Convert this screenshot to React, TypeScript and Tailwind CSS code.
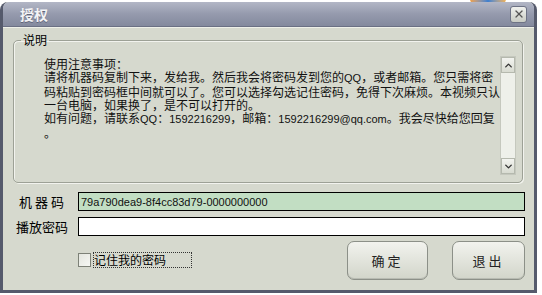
import { ChevronDown, ChevronUp, X } from 'lucide-react'

function Latin({ children }: { children: string }) {
  return <span className="font-['Liberation_Sans',sans-serif] text-[11px]">{children}</span>
}

function Button({ label }: { label: string }) {
  return (
    <button className="flex h-[39px] items-center justify-center rounded-[7px] border border-[#8c9088] bg-gradient-to-b from-[#f2f3ee] to-[#d2d5ca] text-[13px] tracking-[3px] text-[#222] shadow-[inset_0_-1px_0_#b8bbb2]">
      {label}
    </button>
  )
}

export default function App() {
  return (
    <div className="relative h-[295px] w-[542px] overflow-hidden bg-white font-['Noto_Sans_CJK_SC',sans-serif] text-black">
      {/* desktop icon peeking behind the window */}
      <div className="absolute left-[470px] top-[-6px] h-[10px] w-[36px] rounded-full bg-gradient-to-r from-[#f0a040] via-[#3b7fd0] to-[#f0b050]" />

      <div className="relative mt-[2px] flex h-[291px] w-[537px] flex-col rounded-t-[8px] border-x-[3px] border-b-[3px] border-[#555a6c] bg-[#d6d9ce]">
        {/* title bar */}
        <div className="flex h-[25px] items-center justify-between rounded-t-[6px] border-b border-[#6b7084] bg-gradient-to-b from-[#b3b7c6] via-[#959aad] to-[#848a9e] pl-[17px] pr-[7px]">
          <span className="text-[14px] font-bold text-[#f4f4f6] [text-shadow:0_1px_0_#60657a]">授权</span>
          <div className="flex h-[17px] w-[17px] items-center justify-center rounded-[3px] border border-[#6e7385] bg-gradient-to-b from-[#f0f1ee] to-[#c9ccc4]">
            <X size={12} strokeWidth={2.5} className="text-[#555]" />
          </div>
        </div>
        <div className="h-[1px] bg-[#eef0e8]" />

        <div className="flex flex-1 flex-col pl-[10px] pr-[9px] pt-[5px]">
          {/* 说明 group */}
          <fieldset className="mr-[2px] h-[150px] min-w-0 rounded-[5px] border border-[#9da196] shadow-[inset_1px_1px_0_#f2f3ee,1px_1px_0_#f2f3ee]">
            <legend className="ml-[7px] px-[2px] text-[12px] leading-[14px]">说明</legend>
            <div className="mt-[9px] flex h-[119px] gap-[7px] pl-[30px] pr-[6px]">
              <div className="min-w-0 flex-1 pt-[1px] text-[12px] leading-[13px] text-[#111]">
                <div className="whitespace-nowrap">使用注意事项：</div>
                <div className="whitespace-nowrap">
                  请将机器码复制下来，发给我。然后我会将密码发到您的<Latin>QQ</Latin>，或者邮箱。您只需将密
                </div>
                <div className="whitespace-nowrap">
                  码粘贴到密码框中间就可以了。您可以选择勾选记住密码，免得下次麻烦。本视频只认
                </div>
                <div className="whitespace-nowrap">一台电脑，如果换了，是不可以打开的。</div>
                <div className="whitespace-nowrap">
                  如有问题，请联系<Latin>QQ</Latin>：<Latin>1592216299</Latin>，邮箱：
                  <Latin>1592216299@qq.com</Latin>。我会尽快给您回复
                </div>
                <div className="whitespace-nowrap">。</div>
              </div>
              <div className="flex w-[16px] shrink-0 flex-col border border-[#c5c8be] bg-[#eef0ea]">
                <div className="flex h-[16px] items-center justify-center border border-[#b5b9ae] bg-gradient-to-b from-[#f3f4f0] to-[#d8dbd1]">
                  <ChevronUp size={11} strokeWidth={3} className="text-[#333]" />
                </div>
                <div className="flex-1" />
                <div className="flex h-[16px] items-center justify-center border border-[#b5b9ae] bg-gradient-to-b from-[#f3f4f0] to-[#d8dbd1]">
                  <ChevronDown size={11} strokeWidth={3} className="text-[#333]" />
                </div>
              </div>
            </div>
          </fieldset>

          {/* inputs */}
          <div className="mt-[9px] grid grid-cols-[55px_1fr] items-center gap-x-[10px] gap-y-[5px] text-[13px]">
            <span className="pr-[1px] text-right tracking-[3px]">机器码</span>
            <div className="flex h-[19px] items-center border border-black bg-[#c2dec3] pl-[2px] font-['Liberation_Sans',sans-serif] text-[11px] text-[#111]">
              79a790dea9-8f4cc83d79-0000000000
            </div>
            <span className="text-right">播放密码</span>
            <div className="h-[19px] border border-black bg-white" />
          </div>

          {/* bottom row */}
          <div className="mt-[5px] flex items-start">
            <div className="ml-[65px] mt-[11px] flex items-center gap-[2px]">
              <div className="h-[14px] w-[13px] border border-[#7d8177] bg-gradient-to-br from-[#e4e6df] to-[#f6f7f3]" />
              <span className="border border-dotted border-[#333] pr-[25px] text-[12px] leading-[14px]">记住我的密码</span>
            </div>
            <div className="ml-auto grid grid-cols-[81px_73px] gap-[24px]">
              <Button label="确定" />
              <Button label="退出" />
            </div>
          </div>
        </div>
      </div>
    </div>
  )
}
